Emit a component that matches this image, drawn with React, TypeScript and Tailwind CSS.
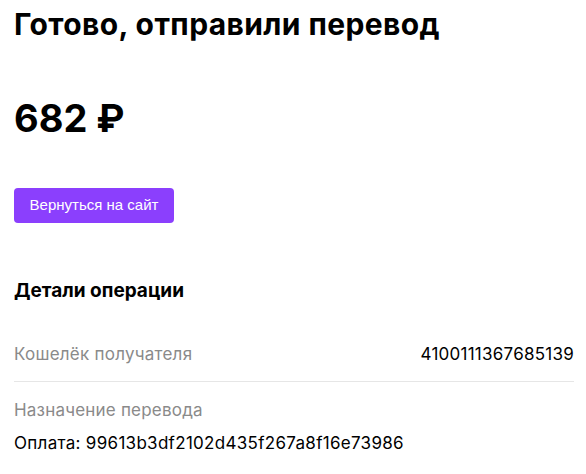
export default function App() {
  return (
    <div className="min-h-[474px] bg-white pl-[14px] pr-[12px] pt-[6px] font-['Inter',sans-serif] text-black">
      <h1 className="text-[30px] leading-[36px] font-bold tracking-[0.4px]">Готово, отправили перевод</h1>

      <div className="mt-[52px] text-[38px] leading-[48px] font-bold">682 ₽</div>

      <button className="mt-[46px] h-[35px] w-[160px] rounded-[4px] bg-[#8b3ffd] font-['Liberation_Sans',sans-serif] text-[15px] text-white">
        Вернуться на сайт
      </button>

      <h2 className="mt-[56px] text-[19px] leading-[24px] font-bold">Детали операции</h2>

      <div className="mt-[40px] flex items-center justify-between border-b border-[#e6e6e6] pb-[16px] text-[17px] leading-[22px] tracking-[0.25px]">
        <span className="text-[#8a8a8a]">Кошелёк получателя</span>
        <span>4100111367685139</span>
      </div>

      <div className="pt-[17px] text-[17px] leading-[22px]">
        <div className="tracking-[0.2px] text-[#8a8a8a]">Назначение перевода</div>
        <div className="mt-[11px] tracking-[0.3px]">Оплата: 99613b3df2102d435f267a8f16e73986</div>
      </div>
    </div>
  );
}
